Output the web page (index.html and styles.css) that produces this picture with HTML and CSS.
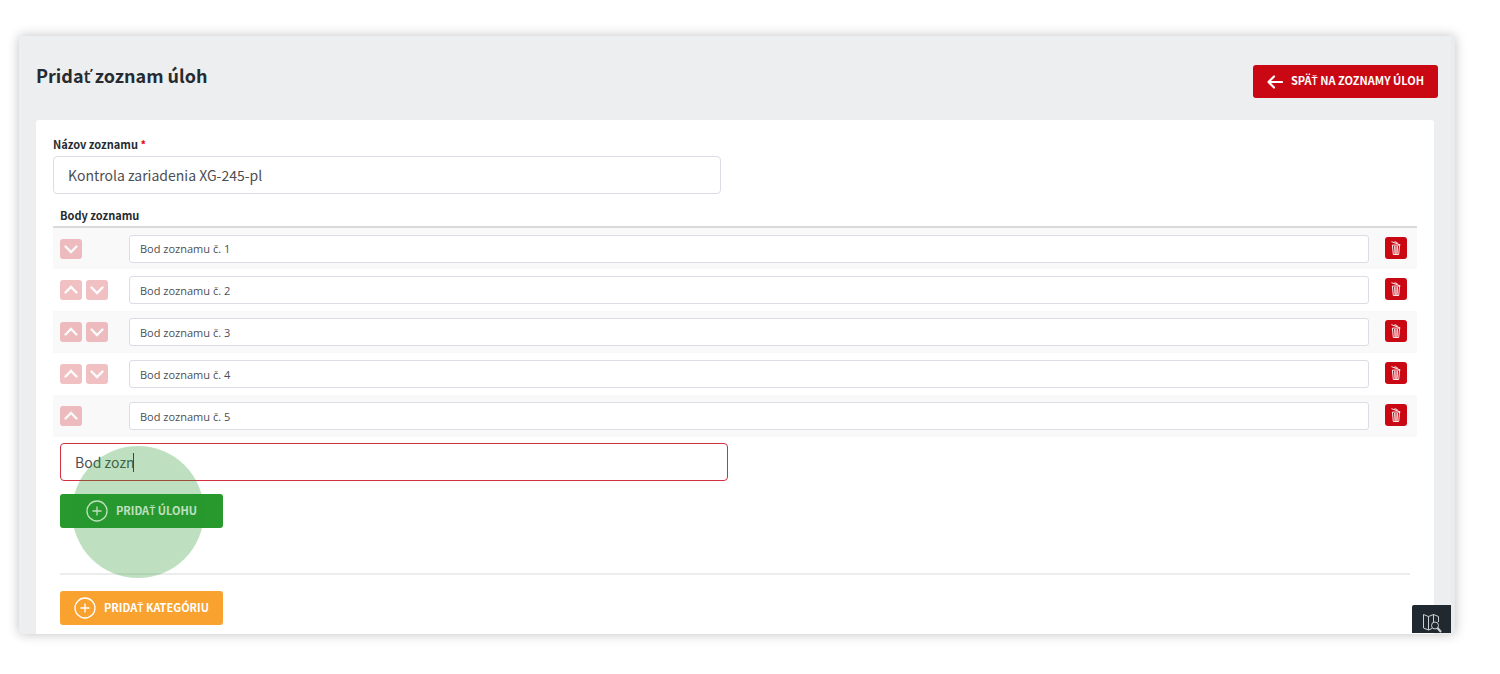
FILE: index.html
```html
<!DOCTYPE html>
<html lang="sk">
<head>
    <meta charset="UTF-8">
    <meta name="viewport" content="width=device-width, initial-scale=1.0">
    <title>Pridať zoznam úloh</title>
    <link rel="stylesheet" href="styles.css">
</head>
<body>
    <svg class="sprite" aria-hidden="true">
        <symbol id="icon-up" viewBox="0 0 22 20">
            <path d="M5.500 12.500 11 7l5.500 5.500" fill="none" stroke="currentColor" stroke-width="2.400" stroke-linecap="round"/>
        </symbol>
        <symbol id="icon-down" viewBox="0 0 22 20">
            <path d="M5.500 7.500 11 13l5.500-5.500" fill="none" stroke="currentColor" stroke-width="2.400" stroke-linecap="round"/>
        </symbol>
        <symbol id="icon-trash" viewBox="0 0 10 14">
            <path d="M.8.800 9 3.800M1.400 4.500l.9 9h5.400l.9-9zM3.600 5.500l.4 7M5 5.500v7M6.500 5.500l-.4 7" fill="none" stroke="currentColor" stroke-width=".9" stroke-linecap="round"/>
            <path d="M3.400 1.600l.4-.9 2.400.9-.2 1" fill="none" stroke="currentColor" stroke-width=".8"/>
        </symbol>
        <symbol id="icon-plus" viewBox="0 0 22 22">
            <path d="M11 6.500v9M6.500 11h9" fill="none" stroke="currentColor" stroke-width="1.300"/>
            <circle cx="11" cy="11" r="10" fill="none" stroke="currentColor" stroke-width="1.300"/>
        </symbol>
    </svg>

    <div class="window">
        <header class="page-header">
            <h1>Prida<span class="caron">ť</span> zoznam úloh</h1>
            <a href="#" class="btn btn-back">
                <svg width="16" height="14" viewBox="0 0 16 14"><path d="M7 1.500 1.500 7 7 12.500M2 7h13" fill="none" stroke="currentColor" stroke-width="2.200" stroke-linecap="round" stroke-linejoin="round"/></svg>
                <span>SPÄ<span class="caron">Ť</span> NA ZOZNAMY ÚLOH</span>
            </a>
        </header>

        <form class="card">
            <label class="field-label" for="list_name">Názov zoznamu <span class="required">*</span></label>
            <input type="text" class="input" id="list_name" name="list_name" value="Kontrola zariadenia XG-245-pl">

            <table class="items">
                <thead>
                    <tr><th colspan="3">Body zoznamu</th></tr>
                </thead>
                <tbody>
                    <tr>
                        <td class="move">
                            <button type="button" aria-label="Nižšie"><svg><use href="#icon-down"/></svg></button>
                        </td>
                        <td><input type="text" class="input input-sm" aria-label="Bod 1" value="Bod zoznamu č. 1"></td>
                        <td class="remove"><button type="button" aria-label="Zmazať"><svg><use href="#icon-trash"/></svg></button></td>
                    </tr>
                    <tr>
                        <td class="move">
                            <button type="button" aria-label="Vyššie"><svg><use href="#icon-up"/></svg></button>
                            <button type="button" aria-label="Nižšie"><svg><use href="#icon-down"/></svg></button>
                        </td>
                        <td><input type="text" class="input input-sm" aria-label="Bod 2" value="Bod zoznamu č. 2"></td>
                        <td class="remove"><button type="button" aria-label="Zmazať"><svg><use href="#icon-trash"/></svg></button></td>
                    </tr>
                    <tr>
                        <td class="move">
                            <button type="button" aria-label="Vyššie"><svg><use href="#icon-up"/></svg></button>
                            <button type="button" aria-label="Nižšie"><svg><use href="#icon-down"/></svg></button>
                        </td>
                        <td><input type="text" class="input input-sm" aria-label="Bod 3" value="Bod zoznamu č. 3"></td>
                        <td class="remove"><button type="button" aria-label="Zmazať"><svg><use href="#icon-trash"/></svg></button></td>
                    </tr>
                    <tr>
                        <td class="move">
                            <button type="button" aria-label="Vyššie"><svg><use href="#icon-up"/></svg></button>
                            <button type="button" aria-label="Nižšie"><svg><use href="#icon-down"/></svg></button>
                        </td>
                        <td><input type="text" class="input input-sm" aria-label="Bod 4" value="Bod zoznamu č. 4"></td>
                        <td class="remove"><button type="button" aria-label="Zmazať"><svg><use href="#icon-trash"/></svg></button></td>
                    </tr>
                    <tr>
                        <td class="move">
                            <button type="button" aria-label="Vyššie"><svg><use href="#icon-up"/></svg></button>
                        </td>
                        <td><input type="text" class="input input-sm" aria-label="Bod 5" value="Bod zoznamu č. 5"></td>
                        <td class="remove"><button type="button" aria-label="Zmazať"><svg><use href="#icon-trash"/></svg></button></td>
                    </tr>
                </tbody>
            </table>

            <div class="new-item">
                <input type="text" class="input input-active" aria-label="Nový bod" value="Bod zozn">
                <span class="caret"></span>
                <button type="button" class="btn btn-add"><svg width="22" height="22"><use href="#icon-plus"/></svg><span>PRIDA<span class="caron">Ť</span> ÚLOHU</span></button>
                <span class="click-mark"></span>
            </div>

            <div class="category">
                <button type="button" class="btn btn-category"><svg width="22" height="22"><use href="#icon-plus"/></svg><span>PRIDA<span class="caron">Ť</span> KATEGÓRIU</span></button>
            </div>
        </form>

        <button type="button" class="map-button" aria-label="Mapa">
            <svg width="20" height="20" viewBox="0 0 20 20" fill="none" stroke="currentColor">
                <path d="M10 15.500 6.500 17 1.500 15V1.500l5 2 5-2 5 2V9M6.500 3.500V17M11.500 1.500V9"/>
                <circle cx="13" cy="12.500" r="3.500"/>
                <path d="m15.500 15 3.500 4" stroke-width="2"/>
            </svg>
        </button>
    </div>
</body>
</html>
```
FILE: styles.css
```css
* {
    box-sizing: border-box;
}
body {
    margin: 0;
    padding: 36px 45px 40px 19px;
    background: #fff;
    color: #262b31;
    font-family: "Noto Sans CJK SC", "Noto Sans", sans-serif;
}
.sprite {
    position: absolute;
    width: 0;
    height: 0;
}
/* the main font has no T with caron */
.caron {
    font-family: "Open Sans", sans-serif;
    font-weight: 600;
}
.window {
    position: relative;
    padding: 0 17px;
    background: #edeef0;
    border-right: 4px solid #e9ebed;
    border-radius: 3px;
    box-shadow: 0 0 12px rgba(0, 0, 0, 0.25);
}
.page-header {
    display: flex;
    justify-content: space-between;
    align-items: flex-start;
    height: 84px;
    margin-right: -4px;
    padding-top: 24px;
}
.page-header h1 {
    margin: 0;
    font-size: 18px;
    line-height: 30px;
    font-weight: 700;
}
.btn {
    display: flex;
    align-items: center;
    justify-content: center;
    gap: 8px;
    height: 34px;
    padding: 0 14px;
    border: none;
    border-radius: 3px;
    color: #fff;
    font-family: inherit;
    font-size: 11px;
    line-height: 18px;
    font-weight: 700;
    text-decoration: none;
    white-space: nowrap;
    cursor: pointer;
}
.btn svg {
    flex: none;
}
.btn > span {
    padding-bottom: 2px;
}
.btn-back {
    height: 33px;
    margin-top: 5px;
    background: #ca0813;
}
.card {
    padding: 16px 17px 9px;
    background: #fff;
    border-radius: 3px 3px 0 0;
}
.field-label {
    display: block;
    margin-bottom: 4px;
    font-size: 11px;
    line-height: 16px;
    font-weight: 700;
}
.required {
    color: #e30613;
}
.input {
    display: block;
    width: 49%;
    height: 38px;
    padding: 0 14px;
    border: 1px solid #dcdde4;
    border-radius: 4px;
    background: #fff;
    color: #4c4f54;
    font-family: inherit;
    font-size: 14px;
    outline: none;
}
.items {
    width: 100%;
    margin-top: 13px;
    border-collapse: collapse;
}
.items th {
    height: 20px;
    padding: 0 7px 4px;
    border-bottom: 2px solid #d9dadb;
    font-size: 11px;
    line-height: 14px;
    font-weight: 700;
    text-align: left;
}
.items td {
    height: 42px;
    padding: 0;
}
.items tbody tr:nth-child(odd) {
    background: #f9f9f9;
}
.items .move {
    width: 76px;
    padding-left: 7px;
    font-size: 0;
}
.move button,
.remove button {
    display: inline-flex;
    align-items: center;
    justify-content: center;
    width: 22px;
    height: 20px;
    padding: 0;
    border: none;
    border-radius: 3px;
    background: #ca0813;
    color: #fff;
    vertical-align: middle;
    cursor: pointer;
}
.move button {
    margin-right: 4px;
    opacity: 0.25;
}
.move svg {
    width: 22px;
    height: 20px;
}
.items .remove {
    width: 48px;
    padding: 0 10px 2px 0;
    font-size: 0;
    text-align: right;
}
.remove button {
    height: 22px;
}
.remove svg {
    width: 10px;
    height: 14px;
}
.input-sm {
    width: 100%;
    height: 28px;
    padding: 0 10px;
    border-radius: 3px;
    font-family: "Open Sans", sans-serif;
    font-size: 11px;
}
.new-item {
    position: relative;
    margin: 0 7px;
    padding: 6px 0 45px;
    border-bottom: 2px solid #ebecec;
}
.input-active {
    width: 49.5%;
    border-color: #d03040;
}
.new-item .btn,
.category .btn {
    width: 163px;
}
.btn-add {
    margin-top: 13px;
    background: #28992d;
}
.caret {
    position: absolute;
    top: 16px;
    left: 73px;
    width: 1px;
    height: 19px;
    background: #333;
}
.click-mark {
    position: absolute;
    top: 9px;
    left: 12px;
    width: 132px;
    height: 132px;
    border-radius: 50%;
    background: rgba(40, 153, 45, 0.3);
    pointer-events: none;
}
.category {
    padding: 16px 7px 0;
}
.btn-category {
    background: #f9a230;
}
.map-button {
    position: absolute;
    right: 0;
    bottom: 1px;
    display: flex;
    align-items: flex-end;
    justify-content: center;
    width: 39px;
    height: 28px;
    padding: 0;
    border: none;
    border-radius: 2px 0 0 0;
    background: #20292f;
    color: #ccd0d2;
}
```
